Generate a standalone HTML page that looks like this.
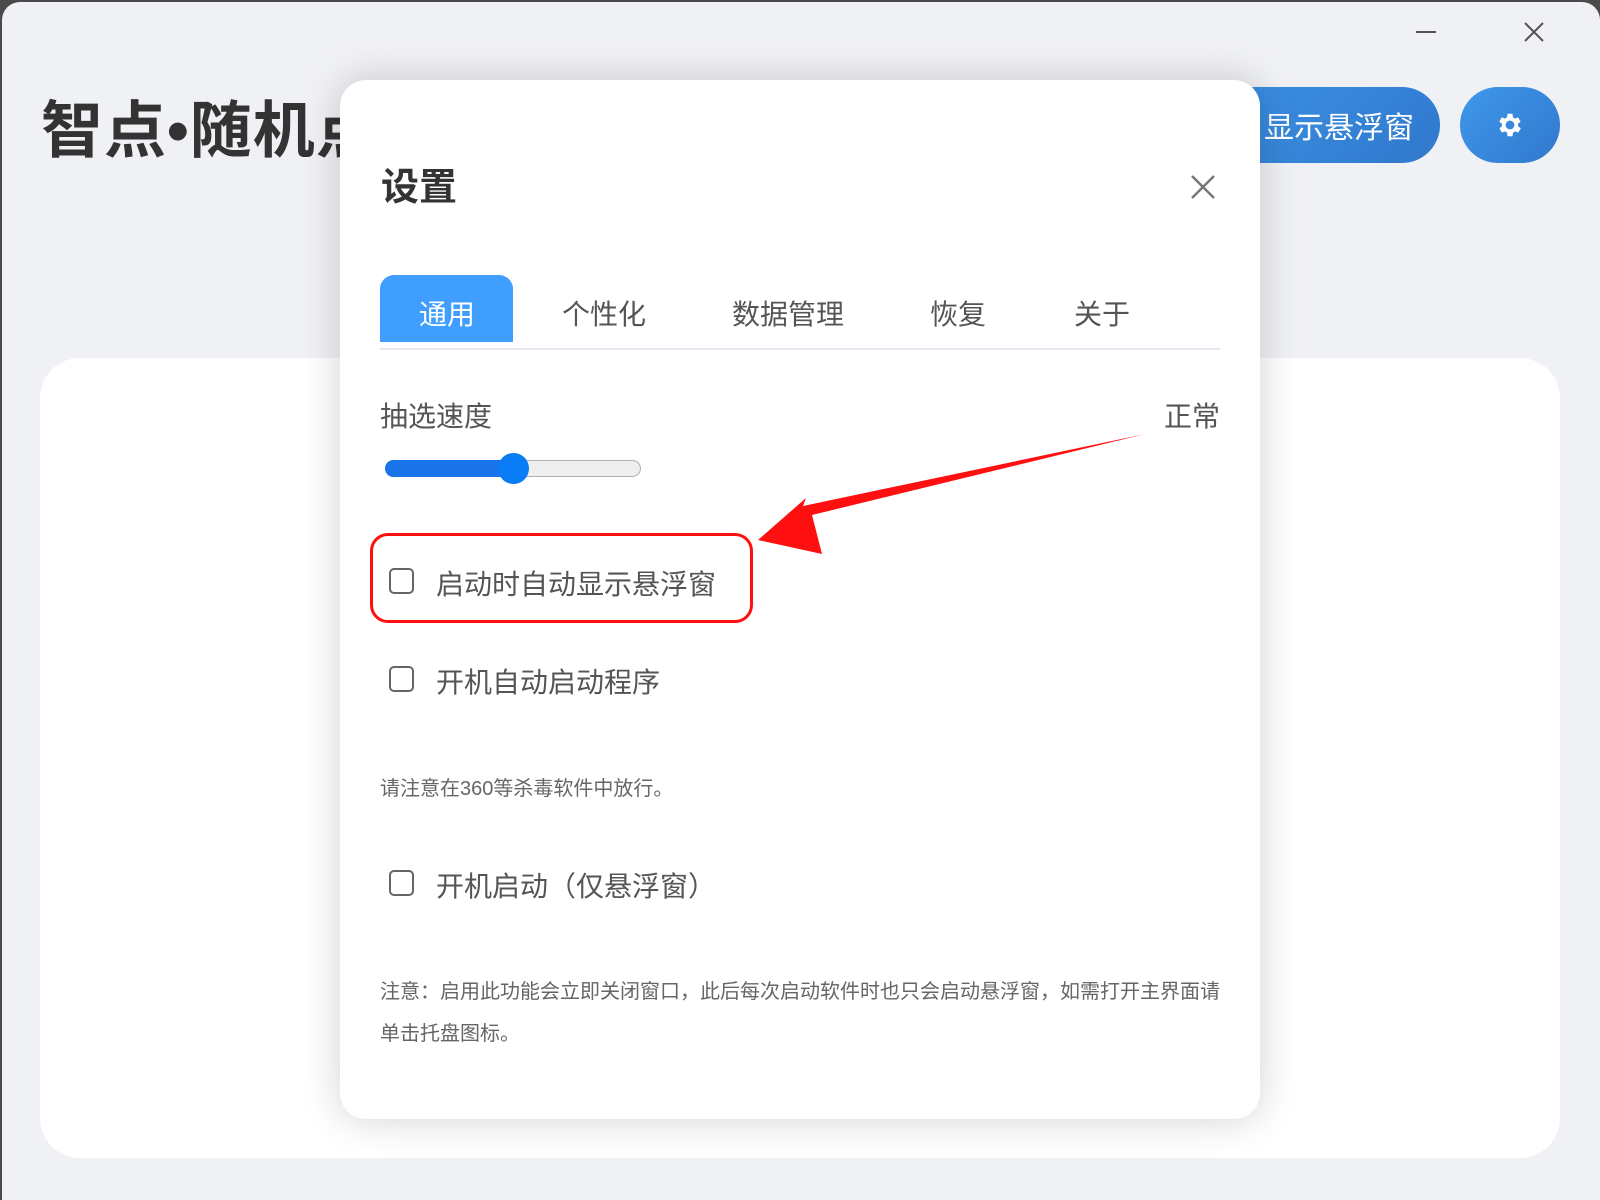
<!DOCTYPE html>
<html><head><meta charset="utf-8"><style>
*{margin:0;padding:0;box-sizing:border-box}
body{width:1600px;height:1200px;overflow:hidden;background:#4a4a4a;font-family:"Liberation Sans","Noto Sans CJK SC",sans-serif;position:relative}
.win{position:absolute;left:2px;top:2px;width:1598px;height:1198px;background:#f0f1f5;border-radius:18px 18px 0 0}
.abs{position:absolute}
.title{left:41px;top:80px;font-size:62px;font-weight:bold;color:#333;letter-spacing:1px}
.btn{top:87px;height:76px;background:linear-gradient(135deg,#3f98ec,#3078cc);border-radius:38px;color:#fff}
.card{left:40px;top:358px;width:1520px;height:800px;background:#fff;border-radius:40px}
.modal{left:340px;top:80px;width:920px;height:1039px;background:#fff;border-radius:26px;box-shadow:0 0 40px rgba(0,0,0,.18)}
.t28{font-size:28px;color:#555}
.cb{width:25px;height:26px;border:2px solid #666;border-radius:5px;position:absolute;left:389px}
.note{font-size:20px;color:#666;left:380px}
</style></head><body>
<div class="win"></div>
<div class="abs" style="left:1416px;top:31px;width:20px;height:2px;background:#555"></div>
<svg class="abs" style="left:1524px;top:22px" width="20" height="20"><path d="M1 1L19 19M19 1L1 19" stroke="#555" stroke-width="2"/></svg>
<div class="abs title">智点•随机点名</div>
<div class="abs btn" style="left:1130px;width:310px;"><span class="abs" style="left:134px;top:16px;font-size:30px">显示悬浮窗</span></div>
<div class="abs btn" style="left:1460px;width:100px;">
<svg class="abs" style="left:35px;top:23px" width="30" height="30" viewBox="0 0 24 24"><path fill="#fff" d="M19.4 13a7.5 7.5 0 000-2l2.1-1.6-2-3.5-2.5 1a7.4 7.4 0 00-1.7-1L15 3h-4l-.4 2.9a7.4 7.4 0 00-1.7 1l-2.5-1-2 3.5L6.6 11a7.5 7.5 0 000 2l-2.1 1.6 2 3.5 2.5-1a7.4 7.4 0 001.7 1L11 21h4l.4-2.9a7.4 7.4 0 001.7-1l2.5 1 2-3.5zM13 15.5A3.5 3.5 0 1113 8.5a3.5 3.5 0 010 7z" transform="translate(-1 0)"/></svg></div>
<div class="abs card"></div>
<div class="abs modal"></div>
<div class="abs" style="left:381px;top:156px;font-size:38px;font-weight:bold;color:#333">设置</div>
<svg class="abs" style="left:1191px;top:175px" width="24" height="24"><path d="M1 1L23 23M23 1L1 23" stroke="#777" stroke-width="2.5"/></svg>
<div class="abs" style="left:380px;top:275px;width:133px;height:67px;background:#409eff;border-radius:14px 14px 0 0"></div>
<div class="abs" style="left:380px;top:348px;width:840px;height:2px;background:#e4e7ed"></div>
<div class="abs t28" style="left:419px;top:293px;color:#fff">通用</div>
<div class="abs t28" style="left:562px;top:293px">个性化</div>
<div class="abs t28" style="left:732px;top:293px">数据管理</div>
<div class="abs t28" style="left:930px;top:293px">恢复</div>
<div class="abs t28" style="left:1074px;top:293px">关于</div>
<div class="abs t28" style="left:380px;top:395px">抽选速度</div>
<div class="abs t28" style="left:1164px;top:395px">正常</div>
<div class="abs" style="left:385px;top:460px;width:256px;height:17px;background:#efefef;border:1.5px solid #b0b0b0;border-radius:9px"></div>
<div class="abs" style="left:385px;top:460px;width:130px;height:17px;background:#1a73e8;border-radius:9px"></div>
<div class="abs" style="left:498px;top:453px;width:31px;height:31px;background:#0a7cf5;border-radius:50%"></div>
<div class="abs" style="left:370px;top:533px;width:383px;height:90px;border:3.5px solid #ff1010;border-radius:18px"></div>
<div class="cb" style="top:568px"></div>
<div class="abs t28" style="left:436px;top:563px">启动时自动显示悬浮窗</div>
<div class="cb" style="top:666px"></div>
<div class="abs t28" style="left:436px;top:661px">开机自动启动程序</div>
<div class="abs note" style="top:772px">请注意在360等杀毒软件中放行。</div>
<div class="cb" style="top:870px"></div>
<div class="abs t28" style="left:436px;top:865px">开机启动（仅悬浮窗）</div>
<div class="abs note" style="top:971px;line-height:42px;width:850px">注意：启用此功能会立即关闭窗口，此后每次启动软件时也只会启动悬浮窗，如需打开主界面请<br>单击托盘图标。</div>
<svg class="abs" style="left:0;top:0" width="1600" height="1200"><path d="M1145 434L812 515 822 554 758 540 806 498 803 506Z" fill="#ff1010"/></svg>
</body></html>
